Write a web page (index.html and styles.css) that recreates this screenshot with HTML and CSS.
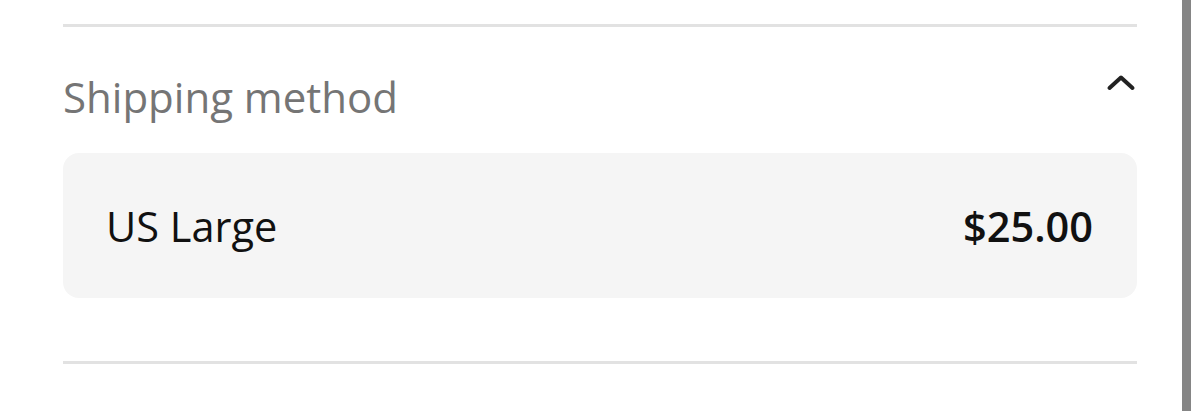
FILE: index.html
```html
<!DOCTYPE html>
<html>
<head>
<meta charset="utf-8">
<link rel="stylesheet" href="styles.css">
</head>
<body>
<div class="page">
  <main class="main">
    <div class="rule top"></div>
    <div class="head">
      <h2 class="title">Shipping method</h2>
      <svg class="chev" width="30" height="18" viewBox="0 0 30 18"><path d="M3.5 14 L15 3.5 L26.5 14" fill="none" stroke="#222" stroke-width="4" stroke-linecap="round" stroke-linejoin="round"/></svg>
    </div>
    <div class="option">
      <span class="name">US Large</span>
      <span class="price">$25.00</span>
    </div>
    <div class="rule bottom"></div>
  </main>
  <div class="scroll"></div>
  <div class="edge"></div>
</div>
</body>
</html>
```
FILE: styles.css
```css
html, body { margin: 0; padding: 0; background: #fff; }
body { font-family: "Open Sans", "Noto Sans", sans-serif; }
.page { display: flex; width: 1200px; height: 411px; overflow: hidden; }
.main { flex: 1 1 auto; min-width: 0; padding: 24px 45px 0 63px; display: flex; flex-direction: column; }
.scroll { flex: 0 0 9px; height: 411px; background-color: #858585; }
.edge { flex: 0 0 9px; height: 411px; background: #fff; }
.rule { height: 3px; background: #e2e2e2; flex: 0 0 auto; }
.head { display: flex; justify-content: space-between; align-items: flex-start; height: 126px; flex: 0 0 auto; }
.title { margin: 49px 0 0 0; font-size: 42px; font-weight: 400; color: #757575; line-height: 1; }
.chev { margin: 47px 1px 0 0; }
.option { display: flex; justify-content: space-between; align-items: center; background: #f5f5f5; border-radius: 16px; height: 145px; flex: 0 0 auto; padding: 0 44px 0 43px; font-size: 41.5px; color: #111; }
.price { font-weight: 600; }
.bottom { margin-top: 63px; }
```
